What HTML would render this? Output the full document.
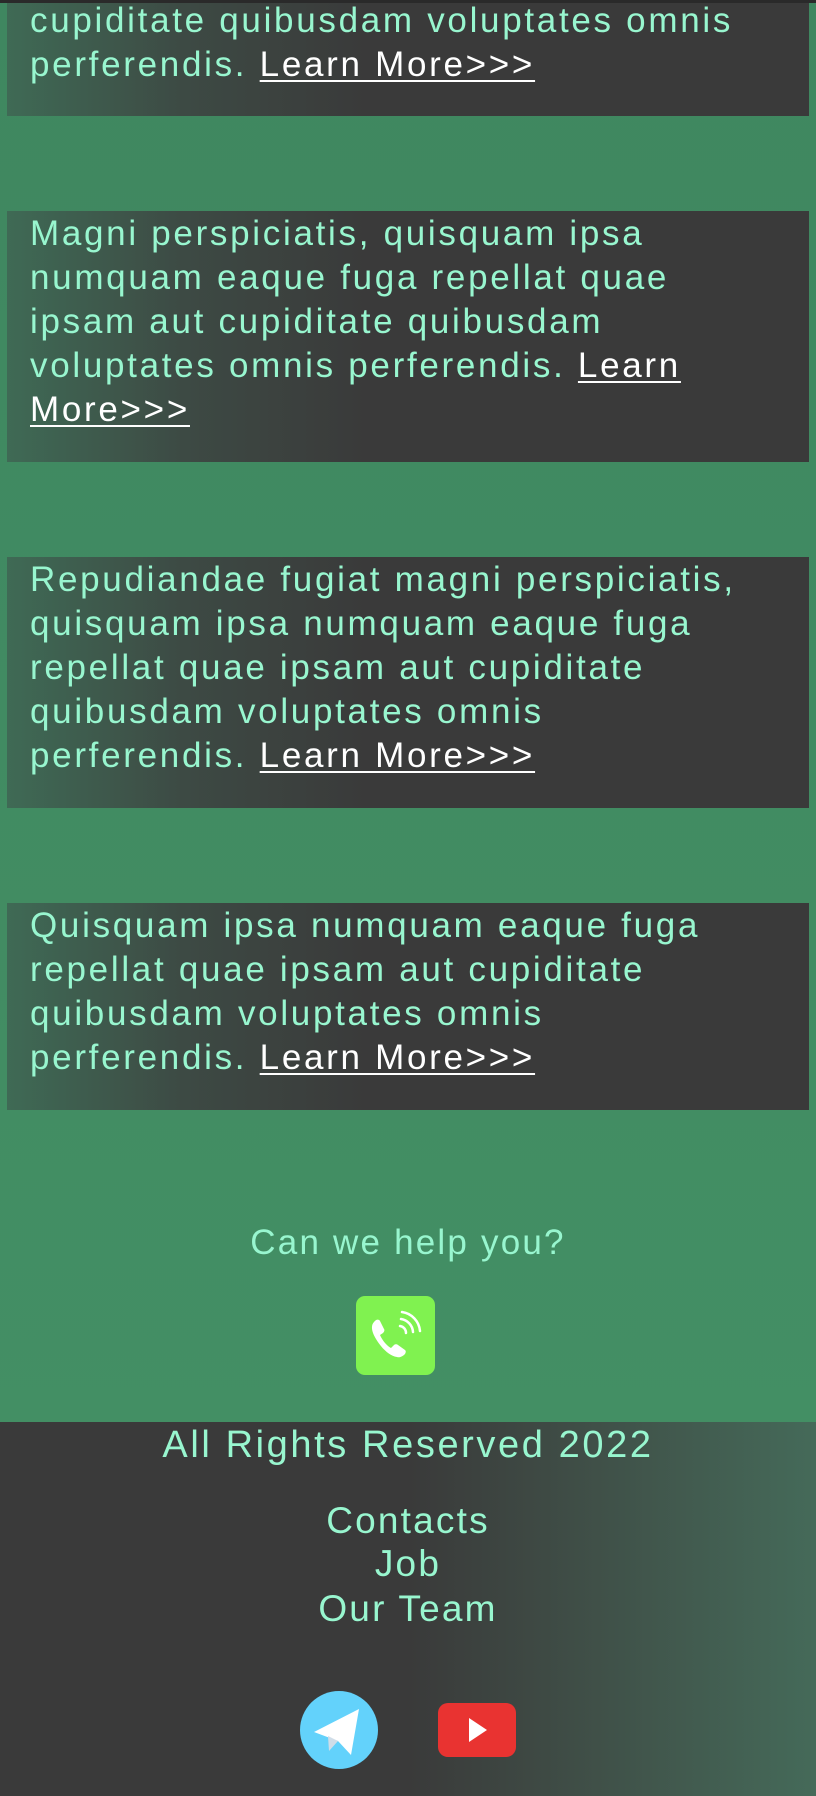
<!DOCTYPE html>
<html><head><meta charset="utf-8"><style>
html,body{margin:0;padding:0}
body{width:816px;height:1796px;overflow:hidden;background:linear-gradient(180deg,#3f8760,#449165);font-family:"Liberation Sans",sans-serif;color:#98f6cf;position:relative}
.top{position:absolute;left:0;top:0;width:816px;height:3px;background:#2a2a2a}
.card{position:absolute;left:7px;width:802px;box-sizing:border-box;padding:1px 0 0 23px;background:linear-gradient(90deg,#3f6a55 0%,#3d4a44 22%,#3a3a3a 45%,#3a3a3a 100%);font-size:35px;line-height:44px;letter-spacing:2.7px;white-space:nowrap}
.card a{color:#fff;text-decoration:underline;text-decoration-thickness:2px;text-underline-offset:4px}
.c{position:absolute;left:0;width:816px;text-align:center;font-size:35px;letter-spacing:2.2px}
.foot{position:absolute;left:0;top:1422px;width:816px;height:374px;background:linear-gradient(90deg,#3a3a3a 0%,#3a3a3a 50%,#3f4d46 70%,#456a59 100%)}
</style></head><body>
<div class="card" style="top:-2px;height:118px">cupiditate quibusdam voluptates omnis<br>perferendis. <a>Learn More&gt;&gt;&gt;</a></div>
<div class="top"></div>
<div class="card" style="top:211px;height:251px">Magni perspiciatis, quisquam ipsa<br>numquam eaque fuga repellat quae<br>ipsam aut cupiditate quibusdam<br>voluptates omnis perferendis. <a>Learn</a><br><a>More&gt;&gt;&gt;</a></div>
<div class="card" style="top:557px;height:251px">Repudiandae fugiat magni perspiciatis,<br>quisquam ipsa numquam eaque fuga<br>repellat quae ipsam aut cupiditate<br>quibusdam voluptates omnis<br>perferendis. <a>Learn More&gt;&gt;&gt;</a></div>
<div class="card" style="top:903px;height:207px">Quisquam ipsa numquam eaque fuga<br>repellat quae ipsam aut cupiditate<br>quibusdam voluptates omnis<br>perferendis. <a>Learn More&gt;&gt;&gt;</a></div>
<div class="c" style="top:1222px;line-height:42px">Can we help you?</div>
<svg style="position:absolute;left:356px;top:1296px" width="79" height="79" viewBox="0 0 79 79">
<rect x="0" y="0" width="79" height="79" rx="9" fill="#80f250"/>
<path d="M18 26c-3 3-3 9 2 17 6 10 14 17 21 18 3 1 6-1 8-3 1-2 1-3 0-4l-7-5c-1-1-3-1-4 0l-3 3c-4-2-9-8-11-13l3-2c1-1 2-3 1-4l-4-8c-1-2-4-2-6 1z" fill="#fff"/>
<path d="M45 23a14 14 0 0 1 12 13M46 16a21 21 0 0 1 18 19M44 30a7 7 0 0 1 6 7" stroke="#fff" stroke-width="2.5" fill="none" stroke-linecap="round"/>
</svg>
<div class="foot"></div>
<div class="c" style="top:1423px;line-height:44px;font-size:38px;letter-spacing:2.6px">All Rights Reserved 2022</div>
<div class="c" style="top:1499px;line-height:44px;font-size:37px">Contacts</div>
<div class="c" style="top:1542px;line-height:44px;font-size:37px">Job</div>
<div class="c" style="top:1587px;line-height:44px;font-size:37px">Our Team</div>
<svg style="position:absolute;left:300px;top:1691px" width="78" height="78" viewBox="0 0 78 78">
<ellipse cx="39" cy="39" rx="39" ry="39" fill="#63d2fb"/>
<path d="M14 41l45-23-8 46-13-14z" fill="#fff"/>
<path d="M28 45l10 5-9 10z" fill="#d0dde8"/>
</svg>
<svg style="position:absolute;left:438px;top:1703px" width="78" height="54" viewBox="0 0 78 54">
<rect width="78" height="54" rx="10" fill="#e93331"/>
<path d="M31 15l18 12-18 12z" fill="#fff"/>
</svg>
</body></html>
